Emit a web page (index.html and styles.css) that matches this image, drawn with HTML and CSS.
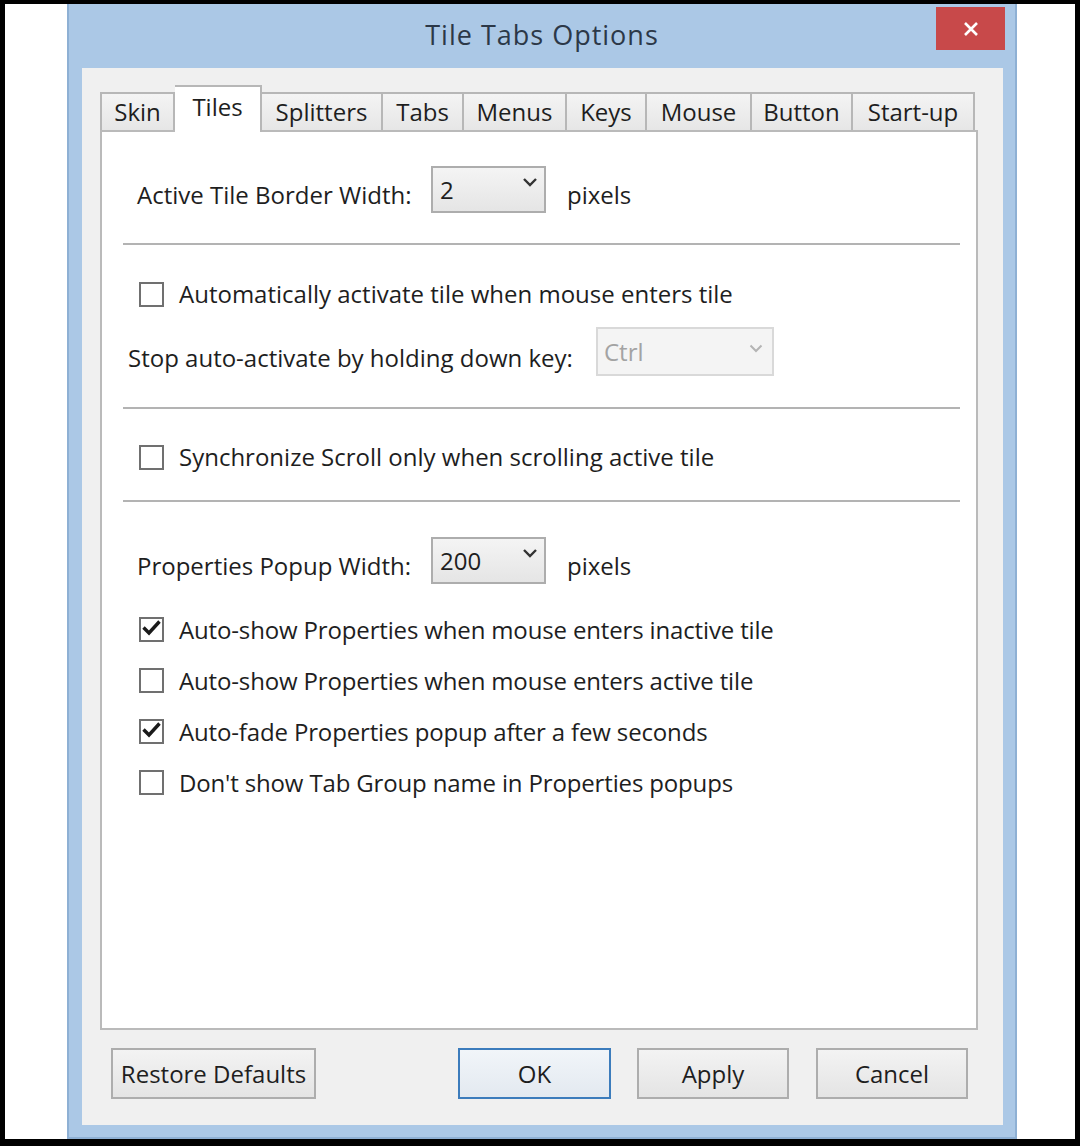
FILE: index.html
```html
<!DOCTYPE html>
<html>
<head>
<meta charset="utf-8">
<title>Tile Tabs Options</title>
<link rel="stylesheet" href="styles.css">
</head>
<body>
<div class="screen">
  <div class="canvas">
    <div class="window">
      <div class="titlebar">
        <div class="title">Tile Tabs Options</div>
        <div class="close">
          <svg width="16" height="16" viewBox="0 0 16 16"><path d="M2 2 L14 14 M14 2 L2 14" stroke="#fff" stroke-width="2.6" fill="none"/></svg>
        </div>
      </div>
      <div class="client">
        <div class="tabs">
          <div class="tab">Skin</div>
          <div class="tab active">Tiles</div>
          <div class="tab">Splitters</div>
          <div class="tab">Tabs</div>
          <div class="tab">Menus</div>
          <div class="tab">Keys</div>
          <div class="tab">Mouse</div>
          <div class="tab">Button</div>
          <div class="tab">Start-up</div>
        </div>
        <div class="panel">
          <div class="combo-row first">
            <span class="label label-wide">Active Tile Border Width:</span>
            <div class="combo">
              <span class="combo-value">2</span>
              <svg class="chev" width="16" height="10" viewBox="0 0 16 10"><path d="M2 2 L8 8 L14 2" stroke="#333" stroke-width="2.4" fill="none"/></svg>
            </div>
            <span class="label units">pixels</span>
          </div>
          <div class="sep sep-1"></div>
          <div class="check-row auto">
            <span class="box"></span>
            <span class="label">Automatically activate tile when mouse enters tile</span>
          </div>
          <div class="combo-row stop">
            <span class="label label-stop">Stop auto-activate by holding down key:</span>
            <div class="combo combo-disabled">
              <span class="combo-value">Ctrl</span>
              <svg class="chev chev-dis" width="14" height="9" viewBox="0 0 14 9"><path d="M1.5 1.5 L7 7 L12.5 1.5" stroke="#b4b4b4" stroke-width="2" fill="none"/></svg>
            </div>
          </div>
          <div class="sep sep-2"></div>
          <div class="check-row sync">
            <span class="box"></span>
            <span class="label">Synchronize Scroll only when scrolling active tile</span>
          </div>
          <div class="sep sep-3"></div>
          <div class="combo-row props">
            <span class="label label-wide">Properties Popup Width:</span>
            <div class="combo">
              <span class="combo-value">200</span>
              <svg class="chev" width="16" height="10" viewBox="0 0 16 10"><path d="M2 2 L8 8 L14 2" stroke="#333" stroke-width="2.4" fill="none"/></svg>
            </div>
            <span class="label units">pixels</span>
          </div>
          <div class="opt-list">
            <div class="opt">
              <span class="box"><svg width="21" height="21" viewBox="0 0 21 21"><path d="M2.5 8.5 L8 14 L18.5 2.5" stroke="#1a1a1a" stroke-width="3.4" fill="none"/></svg></span>
              <span class="label">Auto-show Properties when mouse enters inactive tile</span>
            </div>
            <div class="opt">
              <span class="box"></span>
              <span class="label">Auto-show Properties when mouse enters active tile</span>
            </div>
            <div class="opt">
              <span class="box"><svg width="21" height="21" viewBox="0 0 21 21"><path d="M2.5 8.5 L8 14 L18.5 2.5" stroke="#1a1a1a" stroke-width="3.4" fill="none"/></svg></span>
              <span class="label">Auto-fade Properties popup after a few seconds</span>
            </div>
            <div class="opt">
              <span class="box"></span>
              <span class="label">Don't show Tab Group name in Properties popups</span>
            </div>
          </div>
        </div>
        <div class="buttons">
          <div class="btn btn-restore">Restore Defaults</div>
          <div class="btn btn-ok">OK</div>
          <div class="btn btn-apply">Apply</div>
          <div class="btn btn-cancel">Cancel</div>
        </div>
      </div>
    </div>
  </div>
</div>
</body>
</html>
```

FILE: styles.css
```css
* {
  box-sizing: border-box;
}

body {
  margin: 0;
  background: #000;
  font-family: "Open Sans", "Noto Sans", sans-serif;
  color: #1e1e1e;
}

.screen {
  width: 1080px;
  height: 1146px;
  background: #000;
  padding: 4px 5px 7px 5px;
}

.canvas {
  height: 100%;
  background: #fff;
  padding-left: 62px;
}

.window {
  width: 950px;
  height: 1135px;
  background: #abc8e6;
  border: 2px solid #8eb0d4;
  border-top: 0;
  display: flex;
  flex-direction: column;
}

.titlebar {
  height: 64px;
  flex: none;
  display: grid;
  grid-template-columns: 1fr auto 1fr;
  padding: 0 10px 0 10px;
}

.title {
  grid-column: 2;
  margin-top: 13px;
  font-size: 27px;
  line-height: 36px;
  letter-spacing: 1px;
  color: #2c3848;
  white-space: nowrap;
}

.close {
  grid-column: 3;
  justify-self: end;
  align-self: start;
  margin-top: 3px;
  width: 69px;
  height: 43px;
  background: #c8494a;
  display: flex;
  align-items: center;
  justify-content: center;
}

.client {
  flex: none;
  height: 1057px;
  margin: 0 12px 0 13px;
  background: #f0f0f0;
  padding-top: 17px;
}

.tabs {
  display: grid;
  grid-template-columns: 75px 87px 121px 81px 103px 80px 105px 101px 122px;
  align-items: end;
  height: 45px;
  margin-left: 18px;
  position: relative;
  z-index: 1;
}

.tab {
  height: 38px;
  border-top: 2px solid #b7b7b7;
  border-right: 2px solid #b7b7b7;
  background: linear-gradient(#f4f4f4, #e6e6e6);
  display: flex;
  align-items: center;
  justify-content: center;
  font-size: 24px;
  line-height: 1;
  white-space: nowrap;
}

.tab:first-child {
  border-left: 2px solid #b7b7b7;
}

.tab.active {
  height: 47px;
  margin-bottom: -2px;
  padding-bottom: 6px;
  background: #fff;
}

.panel {
  margin-left: 18px;
  width: 878px;
  height: 900px;
  border: 2px solid #bababa;
  background: #fff;
}

.label {
  font-size: 24px;
  line-height: 30px;
  white-space: nowrap;
}

.combo-row {
  display: flex;
  align-items: center;
}

.combo-row.first {
  height: 47px;
  margin-top: 34px;
  padding-left: 35px;
}

.combo-row.stop {
  height: 49px;
  margin-top: 18px;
  padding-left: 26px;
}

.combo-row.props {
  height: 47px;
  margin-top: 35px;
  padding-left: 35px;
}

.label-wide {
  width: 294px;
  padding-top: 10px;
}

.label-stop {
  width: 468px;
  padding-top: 13px;
}

.units {
  margin-left: 21px;
  padding-top: 10px;
}

.combo {
  width: 115px;
  height: 47px;
  border: 2px solid #adadad;
  background: linear-gradient(#f4f4f4, #e5e5e5);
  display: flex;
  align-items: center;
  justify-content: space-between;
  padding: 0 6px 0 7px;
}

.combo-value {
  font-size: 24px;
  line-height: 30px;
}

.chev {
  align-self: flex-start;
  margin-top: 9px;
}

.combo-disabled {
  width: 178px;
  height: 49px;
  border-color: #d9d9d9;
  background: #f4f4f4;
  color: #a3a3a3;
  padding: 0 9px 0 6px;
}

.chev-dis {
  margin-top: 15px;
}

.sep {
  width: 837px;
  height: 2px;
  margin-left: 21px;
  background: #b3b3b3;
}

.sep-1 {
  margin-top: 30px;
}

.sep-2 {
  margin-top: 31px;
}

.sep-3 {
  margin-top: 28px;
}

.check-row {
  display: flex;
  align-items: center;
  height: 30px;
  padding-left: 37px;
}

.check-row.auto {
  margin-top: 34px;
}

.check-row.sync {
  margin-top: 33px;
}

.box {
  flex: none;
  width: 25px;
  height: 25px;
  border: 2px solid #707070;
  background: #fff;
  margin-right: 15px;
  display: flex;
}

.opt-list {
  margin-top: 20px;
}

.opt {
  display: flex;
  align-items: center;
  height: 51px;
  padding-left: 37px;
}

.opt .label {
  letter-spacing: -0.15px;
}

.buttons {
  display: flex;
  height: 51px;
  margin-top: 18px;
  padding: 0 35px 0 29px;
}

.btn {
  height: 51px;
  width: 152px;
  border: 2px solid #adadad;
  background: linear-gradient(#f3f3f3, #e4e4e4);
  display: flex;
  align-items: center;
  justify-content: center;
  font-size: 24px;
  line-height: 1;
  white-space: nowrap;
}

.btn-restore {
  width: 205px;
}

.btn-ok {
  width: 153px;
  margin-left: auto;
  border-color: #3c7cbc;
  background: linear-gradient(#f1f5f9, #e3e9f0);
}

.btn-apply {
  margin-left: 26px;
}

.btn-cancel {
  margin-left: 27px;
}
```
